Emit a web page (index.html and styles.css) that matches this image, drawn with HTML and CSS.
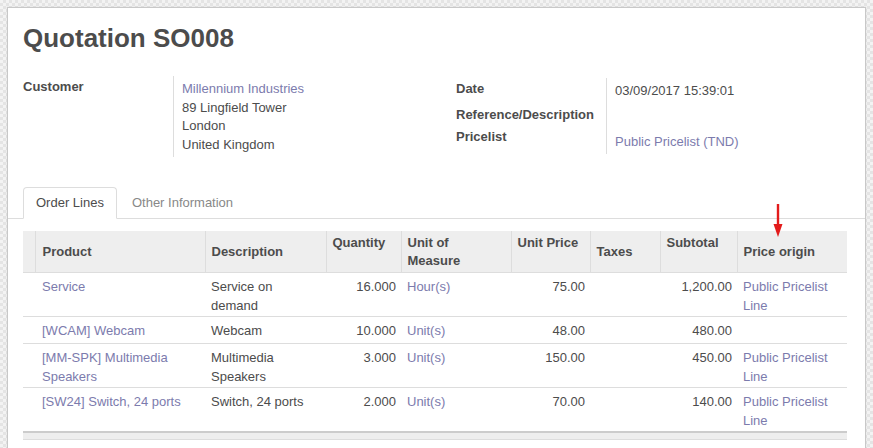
FILE: index.html
```html
<!DOCTYPE html>
<html lang="en">
<head>
<meta charset="utf-8">
<title>Quotation SO008</title>
<link rel="stylesheet" href="styles.css">
</head>
<body>
<div class="sheet">
  <h1 class="title">Quotation SO008</h1>

  <div class="groups">
    <div class="group group-left">
      <div class="label lbl-customer">Customer</div>
      <div class="value addr">
        <a class="link">Millennium Industries</a><br>
        89 Lingfield Tower<br>
        London<br>
        United Kingdom
      </div>
    </div>
    <div class="group group-right">
      <div class="label">Date</div>
      <div class="value v-date">03/09/2017 15:39:01</div>
      <div class="label lbl-ref">Reference/Description</div>
      <div class="value v-ref"></div>
      <div class="label">Pricelist</div>
      <div class="value v-pricelist"><a class="link">Public Pricelist (TND)</a></div>
    </div>
  </div>

  <div class="tabs">
    <div class="tab active">Order Lines</div>
    <div class="tab">Other Information</div>
  </div>

  <table class="lines">
    <colgroup>
      <col class="c-handle">
      <col class="c-product">
      <col class="c-desc">
      <col class="c-qty">
      <col class="c-uom">
      <col class="c-price">
      <col class="c-taxes">
      <col class="c-sub">
      <col class="c-origin">
    </colgroup>
    <thead>
      <tr>
        <th class="handle"></th>
        <th class="first">Product</th>
        <th>Description</th>
        <th class="top">Quantity</th>
        <th class="top">Unit of<br>Measure</th>
        <th class="top">Unit Price</th>
        <th>Taxes</th>
        <th class="top">Subtotal</th>
        <th>Price origin</th>
      </tr>
    </thead>
    <tbody>
      <tr>
        <td></td>
        <td class="first"><a class="link">Service</a></td>
        <td>Service on demand</td>
        <td class="num">16.000</td>
        <td><a class="link">Hour(s)</a></td>
        <td class="num">75.00</td>
        <td></td>
        <td class="num">1,200.00</td>
        <td><a class="link">Public Pricelist Line</a></td>
      </tr>
      <tr>
        <td></td>
        <td class="first"><a class="link">[WCAM] Webcam</a></td>
        <td>Webcam</td>
        <td class="num">10.000</td>
        <td><a class="link">Unit(s)</a></td>
        <td class="num">48.00</td>
        <td></td>
        <td class="num">480.00</td>
        <td></td>
      </tr>
      <tr>
        <td></td>
        <td class="first"><a class="link">[MM-SPK] Multimedia Speakers</a></td>
        <td>Multimedia Speakers</td>
        <td class="num">3.000</td>
        <td><a class="link">Unit(s)</a></td>
        <td class="num">150.00</td>
        <td></td>
        <td class="num">450.00</td>
        <td><a class="link">Public Pricelist Line</a></td>
      </tr>
      <tr>
        <td></td>
        <td class="first"><a class="link">[SW24] Switch, 24 ports</a></td>
        <td>Switch, 24 ports</td>
        <td class="num">2.000</td>
        <td><a class="link">Unit(s)</a></td>
        <td class="num">70.00</td>
        <td></td>
        <td class="num">140.00</td>
        <td><a class="link">Public Pricelist Line</a></td>
      </tr>
    </tbody>
    <tfoot>
      <tr><td colspan="9"></td></tr>
    </tfoot>
  </table>
</div>

<svg class="arrow" width="12" height="36" viewBox="0 0 12 36" aria-hidden="true">
  <line x1="6" y1="1" x2="6" y2="24" stroke="#e31b1b" stroke-width="2.4"/>
  <polygon points="1.5,21 10.5,21 6,34" fill="#e31b1b"/>
</svg>
</body>
</html>
```

FILE: styles.css
```css
html, body {
  margin: 0;
  padding: 0;
}

body {
  font-family: "Liberation Sans", Arial, sans-serif;
  font-size: 13px;
  line-height: 1.42857;
  color: #4c4c4c;
  background-color: #f3f3f3;
  background-image: conic-gradient(#e4e4e4 25%, transparent 0 50%, #e4e4e4 0 75%, transparent 0);
  background-size: 6px 6px;
  height: 448px;
  overflow: hidden;
  position: relative;
}

.sheet {
  box-sizing: border-box;
  margin: 7px 0 0 7px;
  width: 859px;
  min-height: 460px;
  background: #fff;
  border: 1px solid #c8c8c8;
  box-shadow: 0 0 1px rgba(0, 0, 0, 0.15);
  padding: 14px 17px 0 15px;
}

.title {
  margin: 0;
  font-size: 26px;
  line-height: 32px;
  font-weight: bold;
  color: #4c4c4c;
}

.link {
  color: #7c7bad;
  text-decoration: none;
}

/* groups */
.groups {
  display: grid;
  grid-template-columns: 433px 1fr;
  align-items: start;
  margin-top: 22px;
}

.group {
  display: grid;
  grid-template-columns: 150px 1fr;
}

.group-right {
  margin-top: 2px;
}

.label {
  font-weight: bold;
  padding: 2px 0 1px;
}

.lbl-ref {
  padding-bottom: 2px;
}

.value {
  border-left: 1px solid #ddd;
  padding: 0 8px;
}

.addr {
  padding-top: 4px;
  padding-bottom: 3px;
}

.v-date {
  padding-top: 4px;
  padding-bottom: 3px;
}

.v-pricelist {
  padding-top: 7px;
  padding-bottom: 2px;
}

/* tabs */
.tabs {
  display: flex;
  margin: 30px -17px 0 -15px;
  padding-left: 15px;
  border-bottom: 1px solid #ddd;
}

.tab {
  padding: 6px 12px 5px;
  margin-right: 2px;
  margin-bottom: -1px;
  border: 1px solid transparent;
  border-radius: 4px 4px 0 0;
  color: #888;
}

.tab.active {
  color: #4c4c4c;
  background: #fff;
  border-color: #ddd;
  border-bottom-color: #fff;
}

/* table */
.lines {
  width: 824px;
  margin-top: 12px;
  table-layout: fixed;
  border-collapse: collapse;
}

.c-handle { width: 12px; }
.c-product { width: 170px; }
.c-desc { width: 121px; }
.c-qty { width: 75px; }
.c-uom { width: 110px; }
.c-price { width: 79px; }
.c-taxes { width: 70px; }
.c-sub { width: 77px; }
.c-origin { width: 110px; }

.lines th {
  background: #eee;
  font-weight: bold;
  text-align: left;
  vertical-align: middle;
  padding: 3px 6px 1px 6px;
  border-left: 1px solid #ddd;
  border-bottom: 1px solid #ddd;
}

.lines th.handle {
  border-left: none;
  padding: 0;
}

.lines th.top {
  vertical-align: top;
}

.lines tbody td {
  vertical-align: top;
  padding: 5px 6px 1px 6px;
  height: 20px;
  border-top: 1px solid #ddd;
}

.lines .first {
  padding-left: 7px;
}

.lines tbody tr:first-child td {
  border-top: none;
}

.lines td.num {
  text-align: right;
  padding-right: 5px;
}

.lines tfoot td {
  height: 6px;
  padding: 0;
  background: #eee;
  border-top: 2px solid #ccc;
  border-bottom: 1px solid #ddd;
}

/* annotation overlay */
.arrow {
  position: absolute;
  left: 772px;
  top: 203px;
}
```
